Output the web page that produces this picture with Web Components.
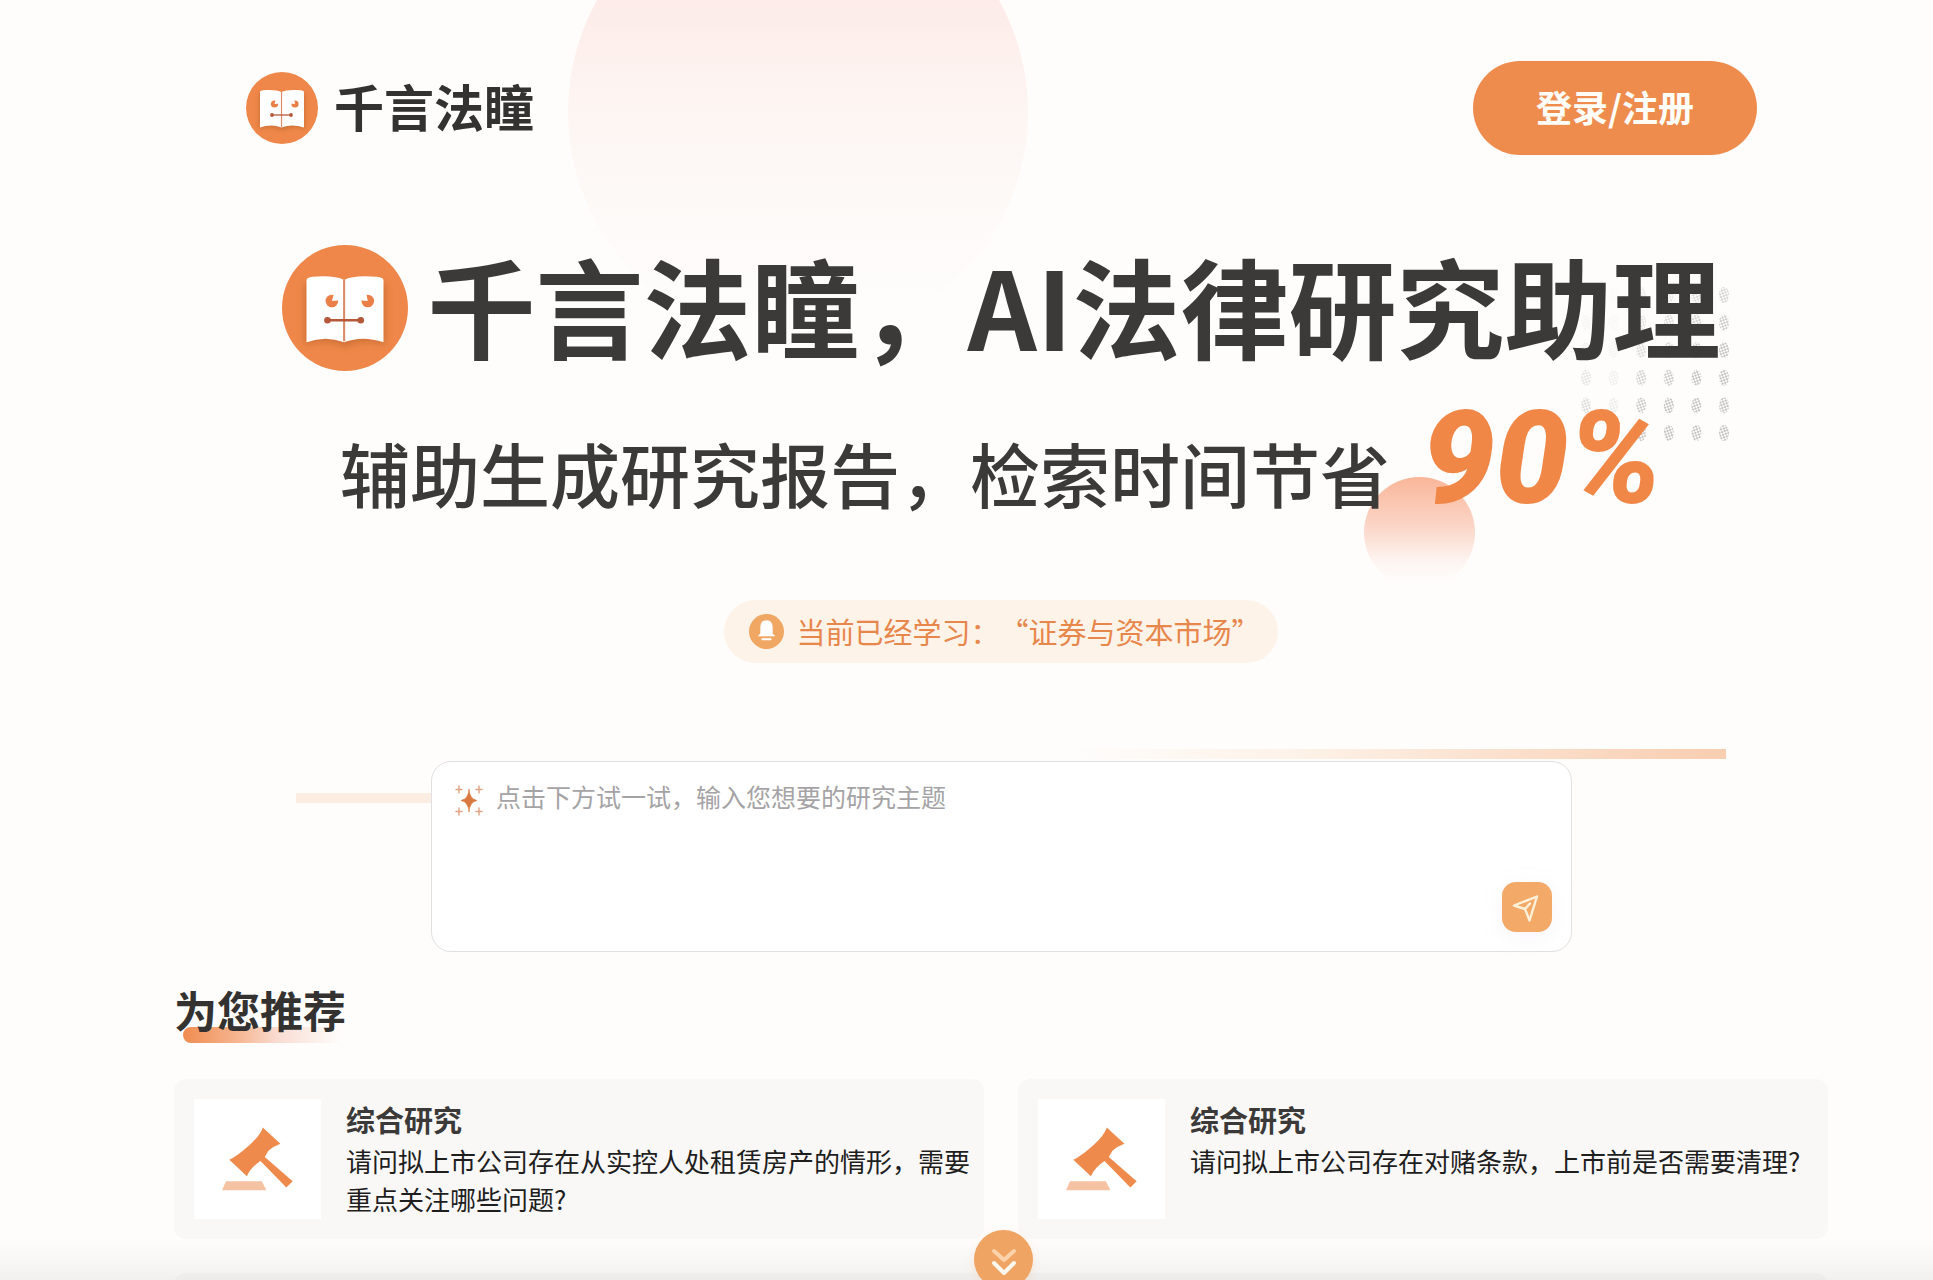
<!DOCTYPE html>
<html lang="zh-CN">
<head>
<meta charset="utf-8">
<title>千言法瞳</title>
<style>
  html, body { margin: 0; height: 100%; }
  body {
    overflow: hidden;
    background: #fefdfc;
    color: #3b3a39;
    font-family: "Noto Sans CJK SC", sans-serif;
  }
</style>
</head>
<body>
<law-home></law-home>

<script>
const define = (name, html, setup) => {
  const template = document.createElement('template');
  template.innerHTML = html;
  customElements.define(name, class extends HTMLElement {
    connectedCallback() {
      if (this.shadowRoot) return;
      this.attachShadow({ mode: 'open' }).append(template.content.cloneNode(true));
      if (setup) setup(this, this.shadowRoot);
    }
  });
};

/* Round book-face logo; its size comes from --size */
define('brand-mark', `
  <style>
    :host { display: block; flex: none; width: var(--size, 72px); height: var(--size, 72px); }
    svg { display: block; width: 100%; height: 100%; }
  </style>
  <svg viewBox="0 0 72 72" aria-hidden="true">
    <defs>
      <filter id="soft" x="-30%" y="-30%" width="160%" height="160%"><feGaussianBlur stdDeviation="2"/></filter>
    </defs>
    <circle cx="36" cy="36" r="36" fill="#ee8749"/>
    <path d="M13 22H59V57Q48 53 36 58Q24 53 13 57Z" fill="#b9622b" opacity=".6" filter="url(#soft)"/>
    <path d="M14 20Q14 18 20 18Q31 17.500 35.500 20Q40 17.500 51 18Q58 18 58 20V55.500Q46 51.500 35.500 55.500Q25 51.500 14 55.500Z" fill="#fff"/>
    <path d="M35.500 20V55" stroke="#d98a68" stroke-width="1.200"/>
    <circle cx="28.500" cy="32" r="3.600" fill="#ea8048"/><path d="M28.500 32L30 27L33.500 31.500Z" fill="#fff"/>
    <circle cx="49" cy="32" r="3.600" fill="#ea8048"/><path d="M49 32L48 27L44.500 31.500Z" fill="#fff"/>
    <path d="M26 43H45" stroke="#b5583a" stroke-width="1.300"/>
    <circle cx="26" cy="43" r="1.900" fill="#b5583a"/><circle cx="45" cy="43" r="1.900" fill="#b5583a"/>
  </svg>`);

define('site-header', `
  <style>
    :host { display: flex; align-items: center; justify-content: space-between; padding: 61px 71px 0 72px; }
    a { display: flex; align-items: center; gap: 16px; color: #333231; text-decoration: none; font-size: 50px; line-height: 68px; font-weight: 700; }
    span { padding-bottom: 6px; }
    button {
      width: 284px; height: 94px; border: 0; border-radius: 47px; padding: 0 0 4px;
      background: #ee8c4e; color: #fffdf8; font: 700 36px/48px "Noto Sans CJK SC", sans-serif;
    }
  </style>
  <a href="#"><brand-mark></brand-mark><span>千言法瞳</span></a>
  <button type="button">登录/注册</button>`);

define('hero-banner', `
  <style>
    :host { display: flex; flex-direction: column; align-items: center; padding-top: 90px; position: relative; }
    h1, p { margin: 0; white-space: nowrap; position: relative; }
    h1 { display: flex; align-items: center; gap: 20px; height: 126px; font-size: 108px; line-height: 126px; font-weight: 700; }
    h1 span { padding-bottom: 8px; }
    brand-mark { --size: 126px; }
    p { display: flex; align-items: baseline; gap: 32px; margin-top: 18px; font-size: 70px; line-height: 140px; font-weight: 500; }
    strong { font: italic 900 130px/140px Roboto, sans-serif; color: #f08747; }
    .grid, .ball { position: absolute; }
    .grid { right: 99px; top: 132px; width: 150px; height: 156px; }
    .ball { right: 353px; top: 322px; width: 111px; height: 111px; border-radius: 50%; background: linear-gradient(#f9b699, #fbd6c8 45%, #fdf4f0 75%, #fefdfc00 95%); }
  </style>
  <svg class="grid" viewBox="0 0 150 156" aria-hidden="true">
    <defs>
      <pattern id="grain" width="4" height="4" patternUnits="userSpaceOnUse" patternTransform="rotate(25)">
        <path d="M0 1H2M2 3H4" stroke="#8b8988" stroke-width="1"/>
      </pattern>
    </defs>
    <g id="dots" fill="url(#grain)"></g>
  </svg>
  <div class="ball"></div>
  <h1><brand-mark></brand-mark><span>千言法瞳，AI法律研究助理</span></h1>
  <p><span>辅助生成研究报告，检索时间节省</span><strong>90%</strong></p>`,
  (host, root) => {
    const dots = root.getElementById('dots');
    for (let row = 0; row < 6; row++) {
      for (let col = 0; col < 6; col++) {
        const dot = document.createElementNS('http://www.w3.org/2000/svg', 'ellipse');
        dot.setAttribute('cx', 7 + col * 27.6);
        dot.setAttribute('cy', 8 + row * 27.6);
        dot.setAttribute('rx', 5);
        dot.setAttribute('ry', 8);
        dot.setAttribute('opacity', Math.min(1, (row + col) / 7) * (col === 1 ? 0.4 : 1));
        dots.append(dot);
      }
    }
  });

define('learn-notice', `
  <style>
    :host { display: flex; align-items: center; gap: 12px; align-self: center; height: 63px; padding: 0 17px 0 25px; border-radius: 32px; background: #fdf3e9; color: #e8874b; font-size: 29px; line-height: 40px; white-space: nowrap; text-spacing-trim: space-all; }
    svg { width: 35px; height: 35px; flex: none; }
    span { padding-bottom: 2px; }
  </style>
  <svg viewBox="0 0 34 34" aria-hidden="true">
    <circle cx="17" cy="17" r="17" fill="#f0a764"/>
    <path d="M17 6C12.500 6 11 9.500 11 13V19L8.500 21.500H25.500L23 19V13C23 9.500 21.500 6 17 6Z" fill="#fff"/>
    <path d="M13 24.500H21" stroke="#fff" stroke-width="2" stroke-linecap="round"/>
  </svg>
  <span><slot></slot></span>`);

define('ask-box', `
  <style>
    :host { display: block; position: relative; padding: 0 256px 0 257px; }
    .streak { position: absolute; height: 10px; }
    .left { left: 122px; width: 160px; top: 32px; background: #fcede2; }
    .right { right: 102px; width: 660px; top: -12px; background: linear-gradient(90deg, #fefdfc00, #fdf2e8 35%, #f8cdb0); }
    form { position: relative; display: flex; box-sizing: border-box; height: 191px; border: 1px solid #e2e0e0; border-radius: 20px; background: #fff; padding: 15px 19px 19px 21px; }
    .spark { flex: none; width: 32px; height: 32px; margin-top: 7px; }
    textarea { flex: 1; min-width: 0; border: 0; outline: 0; resize: none; padding: 0; margin: 0 0 0 11px; background: none; color: #333; font: 400 25px/38px "Noto Sans CJK SC", sans-serif; }
    textarea::placeholder { color: #a5a3a5; opacity: 1; }
    button { align-self: flex-end; flex: none; width: 50px; height: 50px; border: 0; border-radius: 14px; padding: 0; background: #f3a968; box-shadow: 0 4px 16px #f4e9f480; }
    button svg { display: block; }
  </style>
  <div class="streak left"></div><div class="streak right"></div>
  <form>
    <svg class="spark" viewBox="0 0 32 32" fill="#d9793f" aria-hidden="true">
      <path d="M16 5Q16.500 15 24 16.500Q16.500 18 16 28Q15.500 18 8 16.500Q15.500 15 16 5Z" stroke="#d9793f" stroke-width=".6"/>
      <g stroke="#e0a384" stroke-width="1.400" stroke-linecap="round">
        <path d="M6 2V9M3 5.500H9M26 2V9M23 5.500H29M6 24V31M3 27.500H9M26 24V31M23 27.500H29"/>
      </g>
    </svg>
    <textarea aria-label="研究主题" placeholder="点击下方试一试，输入您想要的研究主题"></textarea>
    <button type="button" aria-label="发送">
      <svg viewBox="0 0 50 50" width="50" height="50" fill="none" stroke="#fff0da" stroke-width="2.400" stroke-linejoin="round" stroke-linecap="round">
        <path d="M35 14.500L12 23.500L23 27L27.500 38.500ZM23 27L28 21.500"/>
      </svg>
    </button>
  </form>`);

define('section-title', `
  <style>
    :host { display: flex; }
    h2 { position: relative; margin: 0; font-size: 43px; line-height: 60px; font-weight: 700; color: #333231; }
    h2::before { content: ""; position: absolute; z-index: -1; left: 9px; right: 4px; bottom: -4px; height: 16px; border-radius: 8px; background: linear-gradient(90deg, #f08c50, #f6b691 35%, #f9ddd3 60%, #fefdfc00); }
  </style>
  <h2><slot></slot></h2>`);

define('topic-card', `
  <style>
    :host { display: flex; gap: 25px; box-sizing: border-box; min-width: 0; height: 160px; padding: 20px; border-radius: 12px; background: #f9f8f7; }
    .icon { flex: none; display: grid; place-items: center; width: 127px; height: 120px; background: #fff; }
    .text { flex: 1; min-width: 0; margin-right: -20px; }
    h3, p { margin: 0; }
    h3 { margin-bottom: 3px; font-size: 29px; line-height: 40px; font-weight: 700; color: #3b3a39; }
    p { font-size: 26px; line-height: 38px; color: #1f1e1e; }
  </style>
  <div class="icon">
    <svg viewBox="218 500 214 192" width="71" height="64" aria-hidden="true">
      <path d="M341 501L394 550Q374 557 358 571L347 590L431 663L412 682L334 602Q304 622 293 648L240 598Q262 589 302 553Q334 524 341 501Z" fill="#ee8a4c"/>
      <path d="M230 663H338L352 690H218Z" fill="#f6c2a4"/>
    </svg>
  </div>
  <div class="text"><h3><slot name="title"></slot></h3><p><slot></slot></p></div>`);

define('more-button', `
  <style>
    :host { position: fixed; inset: auto 0 0 0; height: 40px; background: linear-gradient(#00000000, #0000000c); }
    button { position: absolute; left: calc(50% + 7px); top: -10px; width: 59px; height: 59px; border: 0; border-radius: 50%; padding: 0; background: #f0a463; box-shadow: 0 3px 10px #f0a46333; }
    svg { display: block; }
  </style>
  <button type="button" aria-label="查看更多">
    <svg viewBox="0 0 59 59" width="59" height="59" fill="none" stroke-width="4" stroke-linecap="round" stroke-linejoin="round">
      <path d="M20 21L30 30L40 21" stroke="#fbd2a9"/><path d="M20 33L30 43L40 33" stroke="#fff8f0"/>
    </svg>
  </button>`);

define('law-home', `
  <style>
    :host { display: block; position: relative; z-index: 0; height: 100%; overflow: hidden; }
    .glow { position: absolute; z-index: -1; left: 568px; top: -118px; width: 460px; height: 460px; border-radius: 50%; background: linear-gradient(#fdebe8 25%, #fdf5f2 48%, #fdf9f7 68%, #fefdfc00 95%); }
    main { display: flex; flex-direction: column; padding: 0 105px 0 174px; }
    learn-notice { margin-top: 57px; }
    ask-box { margin-top: 98px; }
    section-title { margin-top: 27px; }
    .cards { display: grid; grid-template-columns: 1fr 1fr; gap: 34px; margin-top: 40px; }
    .next { height: 160px; border-radius: 12px; background: #f9f8f7; }
  </style>
  <div class="glow"></div>
  <main>
    <site-header></site-header>
    <hero-banner></hero-banner>
    <learn-notice>当前已经学习：“证券与资本市场”</learn-notice>
    <ask-box></ask-box>
    <section-title>为您推荐</section-title>
    <div class="cards">
      <topic-card><span slot="title">综合研究</span>请问拟上市公司存在从实控人处租赁房产的情形，需要重点关注哪些问题?</topic-card>
      <topic-card><span slot="title">综合研究</span>请问拟上市公司存在对赌条款，上市前是否需要清理?</topic-card>
      <div class="next"></div>
      <div class="next"></div>
    </div>
  </main>
  <more-button></more-button>`);
</script>
</body>
</html>
